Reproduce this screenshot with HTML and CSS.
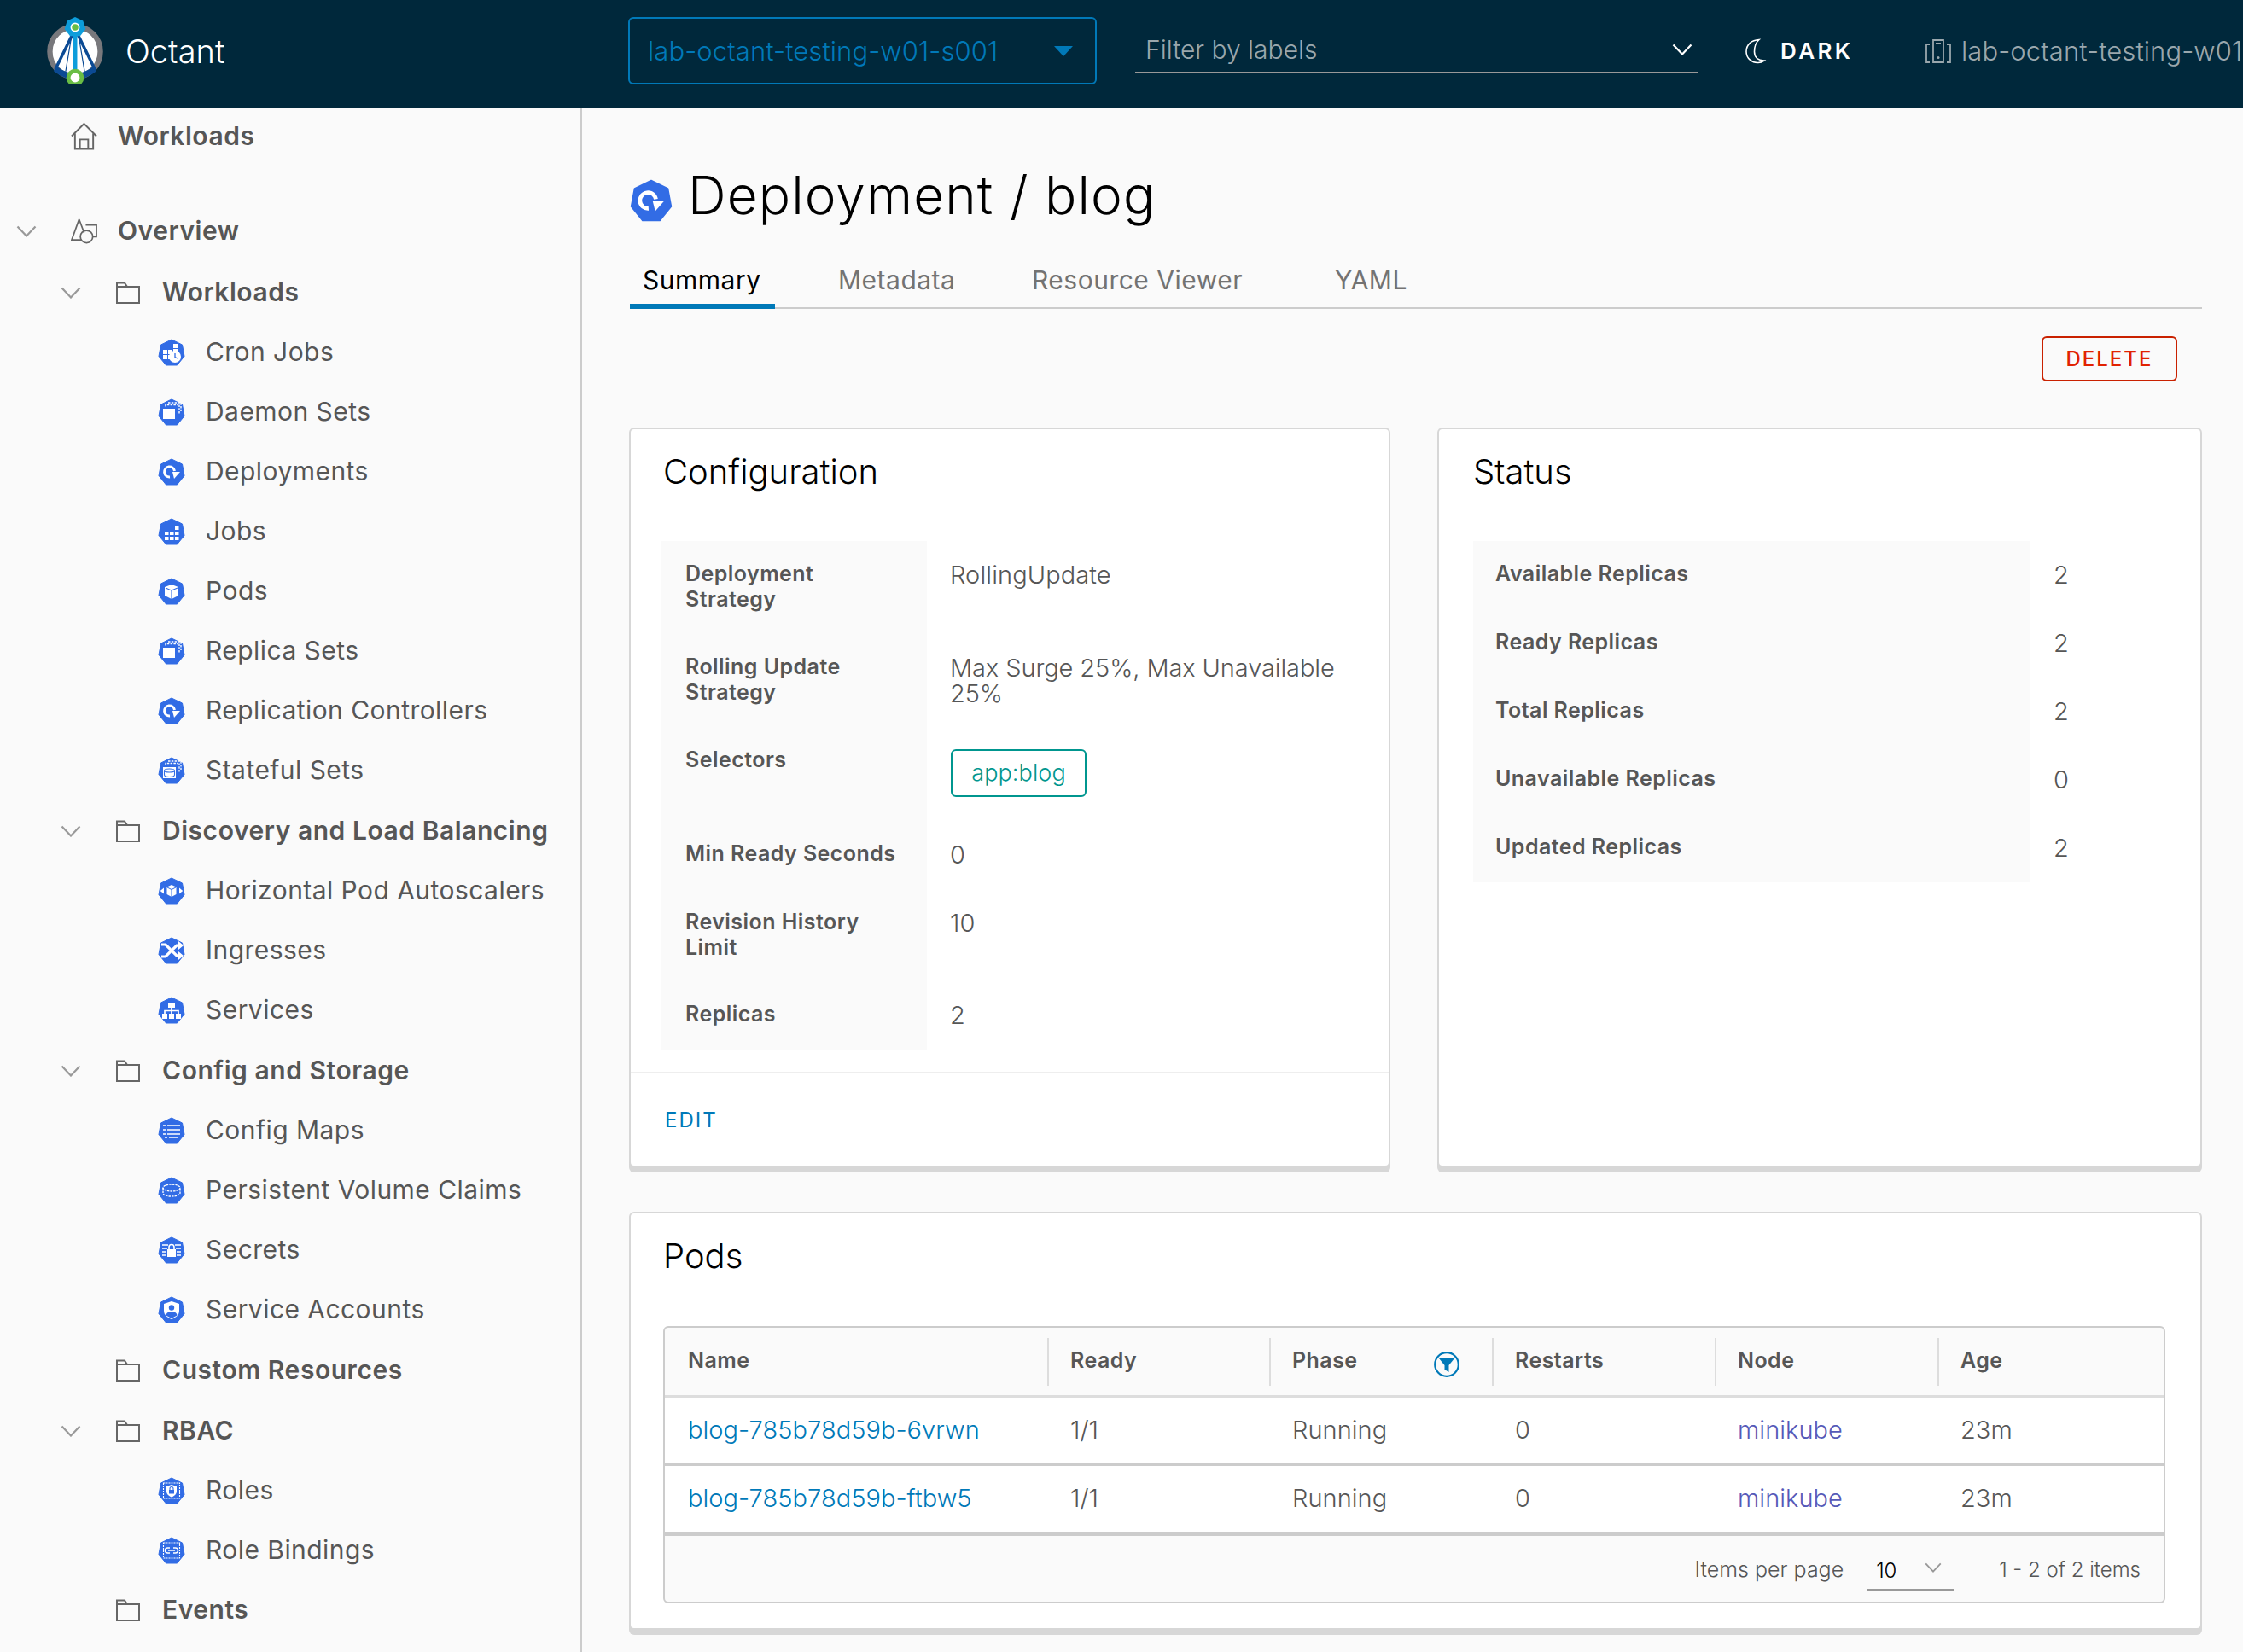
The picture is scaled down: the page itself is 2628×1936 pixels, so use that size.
FILE: index.html
```html
<!DOCTYPE html>
<html lang="en">
<head>
<meta charset="utf-8">
<title>Octant</title>
<link rel="stylesheet" href="styles.css">
</head>
<body>
<svg class="sprite" xmlns="http://www.w3.org/2000/svg">
  <symbol id="hept" viewBox="0 0 32 32"><path d="M16 1 28.500 7 31 20.500 22.500 31H9.500L1 20.500 3.500 7Z" fill="#326ce5" stroke="#326ce5" stroke-linejoin="round"/></symbol>
  <symbol id="chev" viewBox="0 0 24 14"><path d="M1.500 1.500 12 12.500 22.500 1.500" fill="none" stroke="currentColor" stroke-width="2.200"/></symbol>
  <symbol id="folder" viewBox="0 0 28 26"><path d="M1 6V1.500H10L13 6H27V25H1Z M1 6H13" fill="none" stroke="#666" stroke-width="2"/></symbol>
  <symbol id="g-cron" viewBox="0 0 32 32"><g fill="#fff"><rect x="6" y="13" width="5" height="5"/><rect x="12" y="13" width="5" height="5"/><rect x="6" y="19" width="5" height="5"/><rect x="12" y="19" width="3" height="5"/><rect x="18" y="6" width="5" height="5"/><rect x="18" y="12" width="5" height="3"/><circle cx="20" cy="21" r="7"/></g><path d="M20 17v4.500l3 1.500" fill="none" stroke="#326ce5" stroke-width="1.300"/></symbol>
  <symbol id="g-stack" viewBox="0 0 32 32"><rect x="6" y="12" width="14" height="12" fill="#fff"/><path d="M9 9.500V7.500H23M25 7.500V18M12 5H27V15" fill="none" stroke="#fff" stroke-width="1.400" stroke-dasharray="2.500 1.300"/></symbol>
  <symbol id="g-deploy" viewBox="0 0 32 32"><path d="M19.500 15A6 6 0 1 0 14 22" fill="none" stroke="#fff" stroke-width="3"/><path d="M17 16H26L19 24Z" fill="#fff"/></symbol>
  <symbol id="g-job" viewBox="0 0 32 32"><g fill="#fff"><rect x="8" y="16" width="4.500" height="4"/><rect x="14" y="16" width="4.500" height="4"/><rect x="20" y="16" width="4.500" height="4"/><rect x="8" y="22" width="4.500" height="4"/><rect x="14" y="22" width="4.500" height="4"/><rect x="20" y="22" width="4.500" height="4"/><rect x="20" y="9" width="4.500" height="5"/></g></symbol>
  <symbol id="g-pod" viewBox="0 0 32 32"><path d="M16 8 24 11V21L16 25 8 21V11Z" fill="#fff"/><path d="M9 12 16 15V25M23 12 16 15" fill="none" stroke="#326ce5" stroke-width="1.100"/></symbol>
  <symbol id="g-sts" viewBox="0 0 32 32"><rect x="6" y="12" width="15" height="13" fill="#fff"/><path d="M9 9.500V7.500H23M25 7.500V18M12 5H27V15" fill="none" stroke="#fff" stroke-width="1.300" stroke-dasharray="2.500 1.300"/><ellipse cx="13.500" cy="16" rx="6" ry="2" fill="none" stroke="#326ce5" stroke-width="1.100"/><path d="M7.500 16v5c0 1.500 3 2.500 6 2.500s6-1 6-2.500v-5" fill="none" stroke="#326ce5" stroke-width="1.100"/></symbol>
  <symbol id="g-hpa" viewBox="0 0 32 32"><path d="M16 9 21.500 11.500V20L16 23 10.500 20V11.500Z" fill="#fff"/><path d="M11 12 16 14.500V23M21 12 16 14.500" fill="none" stroke="#326ce5" stroke-width="1"/><path d="M7 12.500 2.800 16 7 19.500ZM25 12.500 29.200 16 25 19.500Z" fill="#fff"/></symbol>
  <symbol id="g-ing" viewBox="0 0 32 32"><path d="M4 9h5l13 13h3M4 23h5l13-13h3" fill="none" stroke="#fff" stroke-width="3.200"/><path d="M24 5 30 10 24 15ZM24 17 30 22 24 27Z" fill="#fff"/></symbol>
  <symbol id="g-svc" viewBox="0 0 32 32"><g fill="#fff"><rect x="12" y="7" width="8" height="6"/><rect x="5" y="20" width="6" height="6"/><rect x="13" y="20" width="6" height="6"/><rect x="21" y="20" width="6" height="6"/></g><path d="M16 13v7M8 20v-3.500H24V20" fill="none" stroke="#fff" stroke-width="1.700"/></symbol>
  <symbol id="g-cm" viewBox="0 0 32 32"><path d="M6 10h3M11 10h15M6 15h3M11 15h15M6 20h3M11 20h15M8 24h3M13 24h11" fill="none" stroke="#fff" stroke-width="1.500"/></symbol>
  <symbol id="g-pvc" viewBox="0 0 32 32"><ellipse cx="16" cy="13" rx="10" ry="4" fill="none" stroke="#fff" stroke-width="1.300" stroke-dasharray="2.500 1"/><path d="M6 13v6c0 2.500 4.500 4 10 4s10-1.500 10-4v-6" fill="none" stroke="#fff" stroke-width="1.300" stroke-dasharray="2.500 1"/></symbol>
  <symbol id="g-secret" viewBox="0 0 32 32"><path d="M5 10H12M20 10H27M5 14H11M21 14H27M5 18H10M22 18H27M5 22H10M22 22H27" stroke="#fff" stroke-width="1.300"/><rect x="11" y="15" width="10" height="9" fill="#fff"/><path d="M13 15v-2.500a3 3 0 0 1 6 0V15" fill="none" stroke="#fff" stroke-width="1.600"/></symbol>
  <symbol id="g-sa" viewBox="0 0 32 32"><path d="M16 6 25 9V17C25 22 21 25 16 27 11 25 7 22 7 17V9Z" fill="#fff"/><circle cx="16" cy="13.500" r="3.200" fill="#326ce5"/><path d="M9.500 22.500C10 19 13 18 16 18s6 1 6.500 4.500L16 26Z" fill="#326ce5"/></symbol>
  <symbol id="g-role" viewBox="0 0 32 32"><rect x="6.500" y="7" width="19" height="18" fill="none" stroke="#fff" stroke-width="1.100" stroke-dasharray="2 1"/><path d="M16 9 22 11V16.500C22 20 19.500 22 16 23.500 12.500 22 10 20 10 16.500V11Z" fill="#fff"/><rect x="13" y="15" width="6" height="4.500" fill="#326ce5"/><path d="M14 15v-1.500a2 2 0 0 1 4 0V15" fill="none" stroke="#326ce5" stroke-width="1.100"/></symbol>
  <symbol id="g-rb" viewBox="0 0 32 32"><rect x="6.500" y="7" width="19" height="18" fill="none" stroke="#fff" stroke-width="1.100" stroke-dasharray="2 1"/><path d="M14 13h-2.500a3 3 0 0 0 0 6H14M18 13h2.500a3 3 0 0 1 0 6H18M12 16h8" fill="none" stroke="#fff" stroke-width="1.500"/></symbol>
</svg>

<header class="topbar">
  <div class="brand">
    <svg class="logo" viewBox="0 0 68 80" xmlns="http://www.w3.org/2000/svg">
      <circle cx="33.500" cy="41" r="30" fill="#fff" stroke="#78787c" stroke-width="6.500"/>
      <path d="M8 64Q33.500 84 59 64L56 58Q33.500 76 11 58Z" fill="#0b4a94"/>
      <path d="M33.500 14 10 62M33.500 14 57 62" fill="none" stroke="#0b4a94" stroke-width="3.500"/>
      <path d="M29 24 22 66M38 24 45 66" fill="none" stroke="#0b4a94" stroke-width="1.200"/>
      <path d="M33.500 12V72" fill="none" stroke="#0d9ddb" stroke-width="5"/>
      <path d="M33.500 0 43 4.500 46 14 39.500 22.500H27.500L21 14 24 4.500Z" fill="#0d9ddb"/>
      <circle cx="33.500" cy="12" r="5.500" fill="#fff"/>
      <circle cx="33.500" cy="12" r="3.800" fill="#69bd45"/>
      <circle cx="33.500" cy="72" r="8" fill="#fff" stroke="#69bd45" stroke-width="5"/>
    </svg>
    <span class="brand-name">Octant</span>
  </div>
  <div class="ns-select">
    <span class="ns-text">lab-octant-testing-w01-s001</span>
    <span class="ns-caret"></span>
  </div>
  <div class="filter">
    <span class="filter-text">Filter by labels</span>
    <svg class="filter-chev"><use href="#chev"/></svg>
  </div>
  <div class="theme">
    <svg class="moon" viewBox="0 0 26 30" xmlns="http://www.w3.org/2000/svg"><path d="M17 1.500C8 2 2 7.500 2 15.500S9 29 16 28.500c3 0 5-1 7-2.500-6 0-11.500-3-11.500-10.500C11.500 9 13 5 17 1.500Z" fill="none" stroke="#fff" stroke-width="1.600"/></svg>
    <span class="theme-text">DARK</span>
  </div>
  <div class="cluster">
    <svg class="cluster-icon" viewBox="0 0 30 28" xmlns="http://www.w3.org/2000/svg"><path d="M9 1H21V27H9Z M5 6H1V27H5 M25 6H29V27H25 M12 5H18" fill="none" stroke="#9aa7ad" stroke-width="1.800"/><circle cx="15" cy="21.500" r="1.500" fill="#9aa7ad"/></svg>
    <span class="cluster-text">lab-octant-testing-w01-s001</span>
  </div>
</header>

<div class="shell">
  <nav class="sidebar">
    <div class="row row-l0 row-home">
      <span class="slot-chev"></span>
      <span class="slot-icon0"><svg class="ic-home" viewBox="0 0 32 33" xmlns="http://www.w3.org/2000/svg"><path d="M1 16 16 1 31 16M5 13V31.500H27V13M11 31.500V20H21V31.500" fill="none" stroke="#666" stroke-width="2"/></svg></span>
      <span class="bold-text">Workloads</span>
    </div>
    <div class="row row-l0 row-overview">
      <span class="slot-chev"><svg class="chev"><use href="#chev"/></svg></span>
      <span class="slot-icon0"><svg class="ic-home" viewBox="0 0 32 31" xmlns="http://www.w3.org/2000/svg"><path d="M10 1 1 26H13M10 1 16 17M18 8H31V22H26" fill="none" stroke="#666" stroke-width="1.800"/><circle cx="19" cy="22" r="7.500" fill="none" stroke="#666" stroke-width="1.800"/></svg></span>
      <span class="bold-text">Overview</span>
    </div>
    <div class="row row-l1 row-first"><span class="slot-chev1"><svg class="chev"><use href="#chev"/></svg></span><span class="slot-icon1"><svg class="folder"><use href="#folder"/></svg></span><span class="bold-text">Workloads</span></div>
    <div class="row row-l2"><span class="slot-icon2"><svg class="hept-wrap"><use href="#hept"/><use href="#g-cron"/></svg></span><span class="leaf-text">Cron Jobs</span></div>
    <div class="row row-l2"><span class="slot-icon2"><svg class="hept-wrap"><use href="#hept"/><use href="#g-stack"/></svg></span><span class="leaf-text">Daemon Sets</span></div>
    <div class="row row-l2"><span class="slot-icon2"><svg class="hept-wrap"><use href="#hept"/><use href="#g-deploy"/></svg></span><span class="leaf-text">Deployments</span></div>
    <div class="row row-l2"><span class="slot-icon2"><svg class="hept-wrap"><use href="#hept"/><use href="#g-job"/></svg></span><span class="leaf-text">Jobs</span></div>
    <div class="row row-l2"><span class="slot-icon2"><svg class="hept-wrap"><use href="#hept"/><use href="#g-pod"/></svg></span><span class="leaf-text">Pods</span></div>
    <div class="row row-l2"><span class="slot-icon2"><svg class="hept-wrap"><use href="#hept"/><use href="#g-stack"/></svg></span><span class="leaf-text">Replica Sets</span></div>
    <div class="row row-l2"><span class="slot-icon2"><svg class="hept-wrap"><use href="#hept"/><use href="#g-deploy"/></svg></span><span class="leaf-text">Replication Controllers</span></div>
    <div class="row row-l2"><span class="slot-icon2"><svg class="hept-wrap"><use href="#hept"/><use href="#g-sts"/></svg></span><span class="leaf-text">Stateful Sets</span></div>
    <div class="row row-l1"><span class="slot-chev1"><svg class="chev"><use href="#chev"/></svg></span><span class="slot-icon1"><svg class="folder"><use href="#folder"/></svg></span><span class="bold-text">Discovery and Load Balancing</span></div>
    <div class="row row-l2"><span class="slot-icon2"><svg class="hept-wrap"><use href="#hept"/><use href="#g-hpa"/></svg></span><span class="leaf-text">Horizontal Pod Autoscalers</span></div>
    <div class="row row-l2"><span class="slot-icon2"><svg class="hept-wrap"><use href="#hept"/><use href="#g-ing"/></svg></span><span class="leaf-text">Ingresses</span></div>
    <div class="row row-l2"><span class="slot-icon2"><svg class="hept-wrap"><use href="#hept"/><use href="#g-svc"/></svg></span><span class="leaf-text">Services</span></div>
    <div class="row row-l1"><span class="slot-chev1"><svg class="chev"><use href="#chev"/></svg></span><span class="slot-icon1"><svg class="folder"><use href="#folder"/></svg></span><span class="bold-text">Config and Storage</span></div>
    <div class="row row-l2"><span class="slot-icon2"><svg class="hept-wrap"><use href="#hept"/><use href="#g-cm"/></svg></span><span class="leaf-text">Config Maps</span></div>
    <div class="row row-l2"><span class="slot-icon2"><svg class="hept-wrap"><use href="#hept"/><use href="#g-pvc"/></svg></span><span class="leaf-text">Persistent Volume Claims</span></div>
    <div class="row row-l2"><span class="slot-icon2"><svg class="hept-wrap"><use href="#hept"/><use href="#g-secret"/></svg></span><span class="leaf-text">Secrets</span></div>
    <div class="row row-l2"><span class="slot-icon2"><svg class="hept-wrap"><use href="#hept"/><use href="#g-sa"/></svg></span><span class="leaf-text">Service Accounts</span></div>
    <div class="row row-l1"><span class="slot-chev1"></span><span class="slot-icon1"><svg class="folder"><use href="#folder"/></svg></span><span class="bold-text">Custom Resources</span></div>
    <div class="row row-l1"><span class="slot-chev1"><svg class="chev"><use href="#chev"/></svg></span><span class="slot-icon1"><svg class="folder"><use href="#folder"/></svg></span><span class="bold-text">RBAC</span></div>
    <div class="row row-l2"><span class="slot-icon2"><svg class="hept-wrap"><use href="#hept"/><use href="#g-role"/></svg></span><span class="leaf-text">Roles</span></div>
    <div class="row row-l2"><span class="slot-icon2"><svg class="hept-wrap"><use href="#hept"/><use href="#g-rb"/></svg></span><span class="leaf-text">Role Bindings</span></div>
    <div class="row row-l1 row-first"><span class="slot-chev1"></span><span class="slot-icon1"><svg class="folder"><use href="#folder"/></svg></span><span class="bold-text">Events</span></div>
  </nav>

  <main class="content">
    <div class="page-title">
      <svg class="title-icon"><use href="#hept"/><use href="#g-deploy"/></svg>
      <h1 class="title-text">Deployment / blog</h1>
    </div>
    <div class="tabs">
      <span class="tab tab-active">Summary</span>
      <span class="tab">Metadata</span>
      <span class="tab">Resource Viewer</span>
      <span class="tab">YAML</span>
    </div>
    <div class="actions"><button class="btn-delete">DELETE</button></div>

    <div class="cards">
      <section class="card card-config">
        <h2 class="card-title">Configuration</h2>
        <div class="kv">
          <div class="kv-k k-two">Deployment Strategy</div><div class="kv-v">RollingUpdate</div>
          <div class="kv-k k-two k-second">Rolling Update Strategy</div><div class="kv-v v-second">Max Surge 25%, Max Unavailable 25%</div>
          <div class="kv-k k-sel">Selectors</div><div class="kv-v v-sel"><span class="tag">app:blog</span></div>
          <div class="kv-k">Min Ready Seconds</div><div class="kv-v">0</div>
          <div class="kv-k k-two">Revision History Limit</div><div class="kv-v">10</div>
          <div class="kv-k">Replicas</div><div class="kv-v">2</div>
        </div>
        <div class="card-foot"><span class="edit">EDIT</span></div>
      </section>
      <section class="card card-status">
        <h2 class="card-title">Status</h2>
        <div class="kv kv-status">
          <div class="kv-k">Available Replicas</div><div class="kv-v">2</div>
          <div class="kv-k">Ready Replicas</div><div class="kv-v">2</div>
          <div class="kv-k">Total Replicas</div><div class="kv-v">2</div>
          <div class="kv-k">Unavailable Replicas</div><div class="kv-v">0</div>
          <div class="kv-k">Updated Replicas</div><div class="kv-v">2</div>
        </div>
      </section>
    </div>

    <section class="card card-pods">
      <h2 class="card-title">Pods</h2>
      <div class="grid">
        <div class="grid-head">
          <div class="th">Name</div>
          <div class="th th-div">Ready</div>
          <div class="th th-div th-phase">Phase
            <svg class="filter-btn" viewBox="0 0 30 30" xmlns="http://www.w3.org/2000/svg"><circle cx="15" cy="15" r="13.800" fill="none" stroke="#0079b8" stroke-width="2.200"/><path d="M6 8H24L17.500 16V24L12.500 21V16Z" fill="#0079b8"/></svg>
          </div>
          <div class="th th-div">Restarts</div>
          <div class="th th-div">Node</div>
          <div class="th th-div">Age</div>
        </div>
        <div class="grid-row">
          <div class="td"><span class="link">blog-785b78d59b-6vrwn</span></div><div class="td">1/1</div><div class="td">Running</div><div class="td">0</div><div class="td"><span class="link-visited">minikube</span></div><div class="td">23m</div>
        </div>
        <div class="grid-row grid-row-last">
          <div class="td"><span class="link">blog-785b78d59b-ftbw5</span></div><div class="td">1/1</div><div class="td">Running</div><div class="td">0</div><div class="td"><span class="link-visited">minikube</span></div><div class="td">23m</div>
        </div>
        <div class="grid-foot">
          <span class="foot-label">Items per page</span>
          <span class="page-size"><span class="page-num">10</span><svg class="page-chev"><use href="#chev"/></svg></span>
          <span class="foot-count">1 - 2 of 2 items</span>
        </div>
      </div>
    </section>
  </main>
</div>
</body>
</html>
```

FILE: styles.css
```css
* { box-sizing: border-box; }
html, body { margin: 0; padding: 0; }
body {
  width: 2628px;
  height: 1936px;
  overflow: hidden;
  background: #fafafa;
  font-family: Inter, "Liberation Sans", sans-serif;
  color: #565656;
}
.sprite { display: none; }

/* top bar */
.topbar {
  height: 126px;
  padding-bottom: 7px;
  background: #00283b;
  display: flex;
  align-items: center;
  overflow: hidden;
}
.brand { width: 736px; flex: none; display: flex; align-items: center; padding-left: 55px; }
.logo { width: 67px; height: 79px; flex: none; margin-right: 25px; }
.brand-name { font-size: 38px; font-weight: 300; color: #fff; }
.ns-select {
  width: 549px; height: 79px; flex: none;
  border: 2px solid #0079b8; border-radius: 6px;
  display: flex; align-items: center; justify-content: space-between;
  padding: 0 26px 0 21px;
}
.ns-text { font-size: 31px; font-weight: 300; color: #0079b8; letter-spacing: 0.1px; }
.ns-caret { width: 0; height: 0; border-left: 11px solid transparent; border-right: 11px solid transparent; border-top: 12px solid #0079b8; }
.filter {
  width: 660px; height: 60px; flex: none; margin: 26px 0 0 45px;
  border-bottom: 2px solid #999;
  display: flex; align-items: center; justify-content: space-between;
  padding: 6px 7px 0 12px;
  align-self: flex-start;
}
.filter-text { font-size: 30px; font-weight: 300; color: #9aa7ad; }
.filter-chev { width: 24px; height: 14px; color: #fff; }
.theme { width: 212px; flex: none; display: flex; align-items: center; padding-left: 54px; }
.moon { width: 26px; height: 30px; flex: none; margin-right: 16px; }
.theme-text { font-size: 26px; font-weight: 600; color: #fff; letter-spacing: 3.400px; }
.cluster { flex: none; display: flex; align-items: center; padding-left: 54px; white-space: nowrap; }
.cluster-icon { width: 30px; height: 28px; margin-right: 12px; flex: none; }
.cluster-text { font-size: 31px; font-weight: 300; color: #9aa7ad; letter-spacing: 0.1px; }

/* shell */
.shell { display: flex; height: 1810px; }

/* sidebar */
.sidebar { width: 682px; flex: none; border-right: 2px solid #ccc; overflow: hidden; }
.row { height: 70px; display: flex; align-items: center; white-space: nowrap; }
.row-l0 { padding-left: 19px; }
.row-home { height: 68px; }
.row-overview { margin-top: 42px; }
.row-l1 { padding-left: 71px; margin-top: 1px; }
.row-first { margin-top: 0; }
.row-overview + .row-first { margin-top: 2px; }
.row-l2 { padding-left: 185px; }
.slot-chev { width: 64px; flex: none; display: flex; }
.slot-chev1 { width: 65px; flex: none; display: flex; }
.slot-icon0 { width: 55px; flex: none; display: flex; }
.slot-icon1 { width: 54px; flex: none; display: flex; }
.slot-icon2 { width: 56px; flex: none; display: flex; }
.chev { width: 24px; height: 14px; color: #999; }
.ic-home { width: 31px; height: 32px; }
.folder { width: 28px; height: 26px; }
.hept-wrap { width: 32px; height: 32px; }
.bold-text { font-size: 30px; font-weight: 600; color: #565656; letter-spacing: 0.540px; padding-bottom: 3px; }
.leaf-text { font-size: 30px; font-weight: 400; color: #565656; letter-spacing: 0.450px; padding-bottom: 3px; }

/* main */
.content { flex: 1; min-width: 0; padding: 76px 48px 0 55px; }
.page-title { display: flex; align-items: center; height: 58px; }
.title-icon { width: 50px; height: 50px; flex: none; margin-left: 1px; margin-right: 18px; align-self: flex-end; }
.title-text { margin: 0; padding-bottom: 6px; font-size: 62px; font-weight: 300; color: #000; letter-spacing: 1.100px; }
.tabs {
  display: grid;
  grid-template-columns: 229px 227px 355px 1fr;
  height: 62px;
  margin-top: 40px;
  border-bottom: 2px solid #ccc;
  margin-left: 1px;
}
.tab { padding: 0 15px; font-size: 30px; font-weight: 400; color: #737373; line-height: 56px; letter-spacing: 0.500px; white-space: nowrap; }
.tab-active { width: 170px; color: #000; height: 62px; border-bottom: 6px solid #0079b8; }
.actions { display: flex; justify-content: flex-end; padding: 32px 29px 0 0; }
.btn-delete {
  width: 159px; height: 53px; background: transparent;
  border: 2px solid #c92100; border-radius: 6px;
  font-family: inherit; font-size: 24px; font-weight: 500; color: #e12200; letter-spacing: 2px; padding: 0;
}
.cards { display: grid; grid-template-columns: 892px 896px; gap: 55px; margin-top: 54px; }
.card {
  background: #fff; border: 2px solid #d7d7d7; border-radius: 6px;
  box-shadow: 0 6px 0 0 #d7d7d7;
}
.card-config, .card-status { height: 867px; }
.card-title { margin: 0; font-size: 40px; font-weight: 300; color: #000; line-height: 56px; padding: 22px 0 2px 38px; }
.kv {
  display: grid; grid-template-columns: 311px 1fr;
  margin: 51px 0 0 36px;
}
.kv-k {
  background: #fafafa; padding: 23px 16px 27px 28px;
  font-size: 25px; font-weight: 600; line-height: 30px; color: #565656; letter-spacing: 0.450px;
}
.kv-v { padding: 25px 40px 0 27px; font-size: 29px; font-weight: 300; line-height: 30px; color: #565656; letter-spacing: 0.100px; }
.k-two { padding-right: 40px; padding-bottom: 25px; }
.k-second { padding-top: 24px; padding-bottom: 26px; }
.v-second { padding-top: 26px; letter-spacing: -0.100px; }
.k-sel { height: 110px; }
.v-sel { padding-top: 0; margin-top: 26px; padding-left: 28px; }
.tag {
  display: inline-flex; align-items: center; justify-content: center;
  width: 159px; height: 56px; border: 2px solid #00968f; border-radius: 6px;
  font-size: 27px; color: #00968f; font-weight: 300;
}
.card-foot { margin-top: 26px; border-top: 2px solid #eee; padding: 40px 0 0 40px; }
.edit { font-size: 24px; font-weight: 400; color: #0079b8; letter-spacing: 2px; }
.kv-status { grid-template-columns: 653px 1fr; margin-left: 40px; }
.card-status .card-title { padding-left: 40px; }
.kv-status .kv-k { height: 80px; padding: 23px 16px 0 26px; }
.kv-status .kv-v { padding-left: 27px; }
.card-pods { margin-top: 52px; width: 1843px; height: 490px; }
.grid {
  margin: 52px 0 0 38px; width: 1760px;
  border: 2px solid #ccc; border-radius: 6px;
  height: 325px; background: #fafafa; overflow: hidden;
}
.grid-head, .grid-row { display: grid; grid-template-columns: 448px 260px 261px 261px 261px 1fr; }
.grid-head { height: 82px; border-bottom: 3px solid #ddd; }
.th { font-size: 25px; font-weight: 600; color: #565656; line-height: 30px; margin: 12px 0 11px; padding: 11px 0 0 27px; letter-spacing: 0.450px; }
.th-div { border-left: 2px solid #ddd; padding-left: 25px; position: relative; }
.th-phase { display: block; }
.filter-btn { position: absolute; width: 30px; height: 30px; top: 16px; left: 191px; }
.grid-row { height: 80px; background: #fff; border-bottom: 3px solid #ccc; }
.grid-row-last { height: 82px; border-bottom: 5px solid #ccc; }
.td { font-size: 29px; font-weight: 300; color: #565656; padding: 22px 0 0 27px; line-height: 32px; letter-spacing: 0.050px; }
.link { color: #0079b8; }
.link-visited { color: #5659b8; }
.grid-foot { display: flex; align-items: center; justify-content: flex-end; height: 78px; padding: 0 27px 0 0; }
.foot-label { font-size: 25px; font-weight: 300; color: #565656; }
.page-size {
  width: 102px; height: 54px; margin: 10px 53px 0 27px;
  border-bottom: 2px solid #999; display: flex; align-items: center; justify-content: space-between; padding: 8px 14px 0 11px;
  align-self: flex-start;
}
.page-num { font-size: 24px; font-weight: 300; color: #000; }
.page-chev { width: 20px; height: 12px; color: #999; margin-bottom: 6px; }
.foot-count { font-size: 24px; font-weight: 300; color: #565656; }
```
